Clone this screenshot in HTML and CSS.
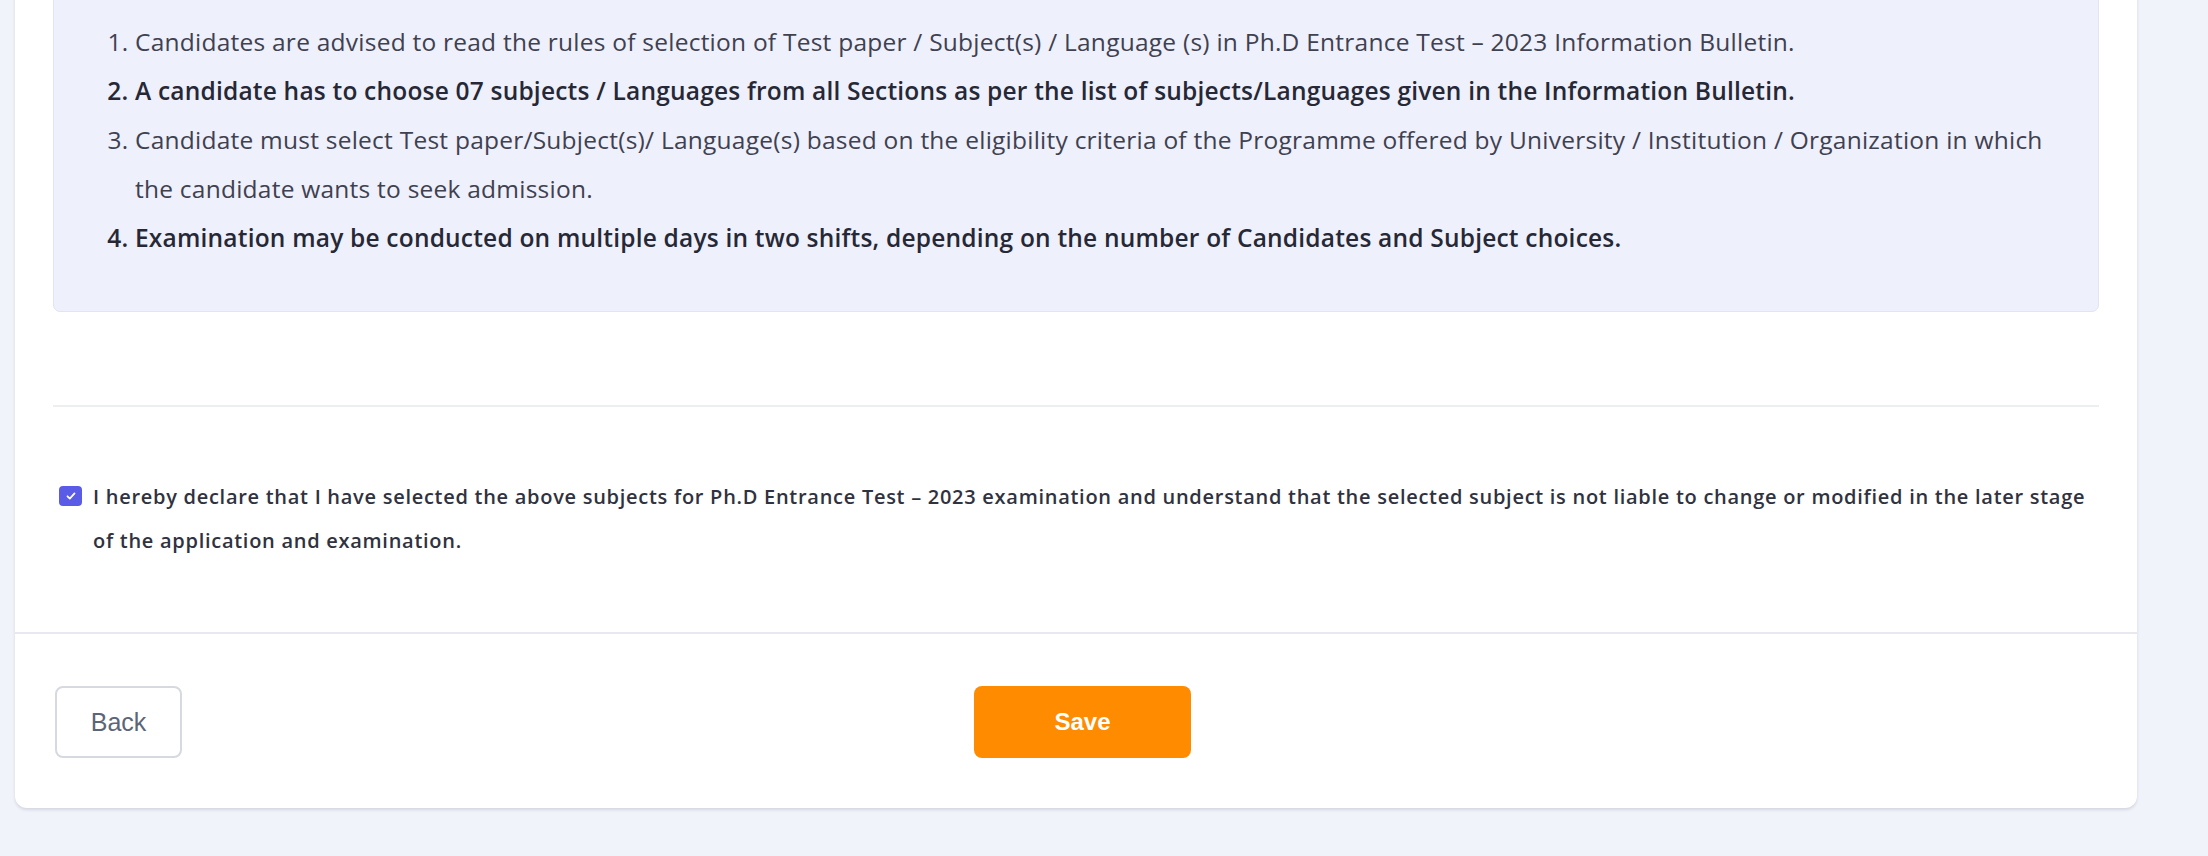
FILE: index.html
```html
<!DOCTYPE html>
<html lang="en">
<head>
<meta charset="utf-8">
<title>Subject Selection</title>
<link rel="stylesheet" href="styles.css">
</head>
<body>
<div class="page">
  <div class="card">
    <div class="card-body">
      <div class="info-box">
        <ol class="rules">
          <li>Candidates are advised to read the rules of selection of Test paper / Subject(s) / Language (s) in Ph.D Entrance Test – 2023 Information Bulletin.</li>
          <li class="strong">A candidate has to choose 07 subjects / Languages from all Sections as per the list of subjects/Languages given in the Information Bulletin.</li>
          <li>Candidate must select Test paper/Subject(s)/ Language(s) based on the eligibility criteria of the Programme offered by University / Institution / Organization in which the candidate wants to seek admission.</li>
          <li class="strong">Examination may be conducted on multiple days in two shifts, depending on the number of Candidates and Subject choices.</li>
        </ol>
      </div>
      <hr class="divider">
      <label class="declare">
        <span class="check">
          <svg viewBox="0 0 24 24" width="14" height="14"><path d="M6 12.5l4 4 8-9" fill="none" stroke="#fff" stroke-width="3" stroke-linecap="round" stroke-linejoin="round"/></svg>
        </span>
        <span class="declare-text">I hereby declare that I have selected the above subjects for Ph.D Entrance Test – 2023 examination and understand that the selected subject is not liable to change or modified in the later stage of the application and examination.</span>
      </label>
    </div>
    <div class="card-footer">
      <button class="btn btn-back" type="button">Back</button>
      <button class="btn btn-save" type="button">Save</button>
      <span class="spacer"></span>
    </div>
  </div>
</div>
</body>
</html>
```

FILE: styles.css
```css
html, body {
  margin: 0;
  padding: 0;
}
body {
  background: #f1f3fb;
  font-family: "Open Sans", "Liberation Sans", sans-serif;
  color: #3b3d4a;
}
.page {
  height: 856px;
  overflow: hidden;
  padding: 0 71px 0 15px;
}
.card {
  background: #ffffff;
  border-radius: 0 0 12px 12px;
  box-shadow: 0 2px 3px rgba(40, 45, 70, 0.14);
  margin-top: -30px;
}
.card-body {
  padding: 0 38px 69px 38px;
}
.info-box {
  background: #eef0fc;
  border: 1px solid #e2e4f3;
  border-radius: 7px;
  padding: 46px 0 49px 0;
}
.rules {
  margin: 0;
  padding: 0 52px 0 81px;
  font-size: 24.5px;
  line-height: 49px;
  color: #3f4150;
  letter-spacing: 0.24px;
}
.rules li.strong {
  font-weight: 600;
  color: #262836;
  letter-spacing: 0.2px;
}
.divider {
  border: 0;
  height: 2px;
  background: #eceef2;
  margin: 93px 0 0 0;
}
.declare {
  display: flex;
  align-items: flex-start;
  margin: 68px 0 0 6px;
  gap: 11px;
}
.check {
  flex: none;
  width: 23px;
  height: 20px;
  margin-top: 11px;
  border-radius: 4px;
  background: #5a5ce8;
  display: flex;
  align-items: center;
  justify-content: center;
}
.declare-text {
  font-family: "Open Sans", "Noto Sans", sans-serif;
  font-size: 20px;
  line-height: 44px;
  letter-spacing: 0.72px;
  color: #303240;
  font-weight: 600;
}
.card-footer {
  border-top: 2px solid #e8e9ee;
  display: flex;
  justify-content: space-between;
  align-items: center;
  padding: 52px 38px 50px 40px;
}
.btn {
  height: 72px;
  border-radius: 8px;
  font-family: "Liberation Sans", Arial, sans-serif;
  font-size: 25px;
  cursor: pointer;
}
.btn-back {
  width: 127px;
  background: #ffffff;
  border: 2px solid #d6d9df;
  color: #5c6577;
}
.btn-save {
  width: 217px;
  background: #ff8b00;
  border: 0;
  color: #ffffff;
  font-weight: 700;
  font-size: 24px;
}
.spacer {
  width: 116px;
}
```
